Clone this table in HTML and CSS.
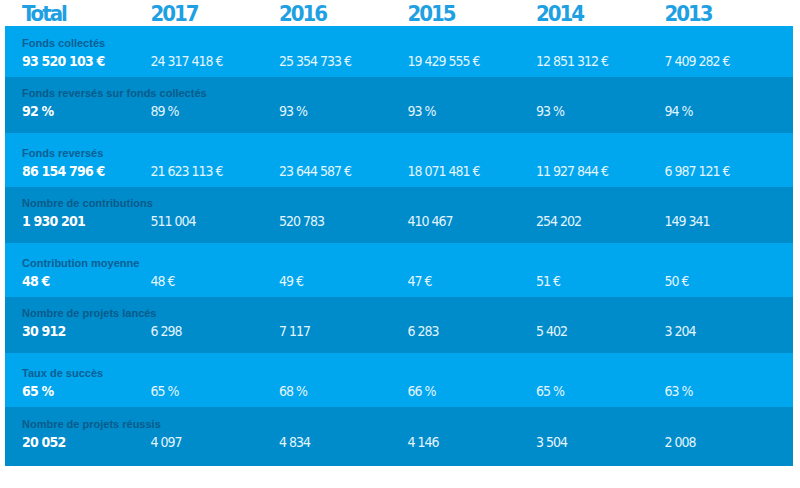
FILE: index.html
```html
<!DOCTYPE html>
<html lang="fr">
<head>
<meta charset="utf-8">
<title>Statistiques</title>
<link rel="stylesheet" href="styles.css">
</head>
<body>
<div class="stats">
  <div class="head">
    <div class="year">Total</div>
    <div class="year">2017</div>
    <div class="year">2016</div>
    <div class="year">2015</div>
    <div class="year">2014</div>
    <div class="year">2013</div>
  </div>
  <div class="table">
    <div class="row light first">
      <div class="label">Fonds collectés</div>
      <div class="vals"><span class="total">93 520 103 €</span><span>24 317 418 €</span><span>25 354 733 €</span><span>19 429 555 €</span><span>12 851 312 €</span><span>7 409 282 €</span></div>
    </div>
    <div class="row dark">
      <div class="label">Fonds reversés sur fonds collectés</div>
      <div class="vals"><span class="total">92 %</span><span>89 %</span><span>93 %</span><span>93 %</span><span>93 %</span><span>94 %</span></div>
    </div>
    <div class="row light">
      <div class="label">Fonds reversés</div>
      <div class="vals"><span class="total">86 154 796 €</span><span>21 623 113 €</span><span>23 644 587 €</span><span>18 071 481 €</span><span>11 927 844 €</span><span>6 987 121 €</span></div>
    </div>
    <div class="row dark">
      <div class="label">Nombre de contributions</div>
      <div class="vals"><span class="total">1 930 201</span><span>511 004</span><span>520 783</span><span>410 467</span><span>254 202</span><span>149 341</span></div>
    </div>
    <div class="row light">
      <div class="label">Contribution moyenne</div>
      <div class="vals"><span class="total">48 €</span><span>48 €</span><span>49 €</span><span>47 €</span><span>51 €</span><span>50 €</span></div>
    </div>
    <div class="row dark">
      <div class="label">Nombre de projets lancés</div>
      <div class="vals"><span class="total">30 912</span><span>6 298</span><span>7 117</span><span>6 283</span><span>5 402</span><span>3 204</span></div>
    </div>
    <div class="row light">
      <div class="label">Taux de succès</div>
      <div class="vals"><span class="total">65 %</span><span>65 %</span><span>68 %</span><span>66 %</span><span>65 %</span><span>63 %</span></div>
    </div>
    <div class="row dark last">
      <div class="label">Nombre de projets réussis</div>
      <div class="vals"><span class="total">20 052</span><span>4 097</span><span>4 834</span><span>4 146</span><span>3 504</span><span>2 008</span></div>
    </div>
  </div>
</div>
</body>
</html>
```
FILE: styles.css
```css
* { box-sizing: border-box; }
body {
  margin: 0;
  background: #ffffff;
  font-family: "DejaVu Sans", sans-serif;
  font-stretch: condensed;
}
.stats {
  padding: 0 7px 0 5px;
}
.head {
  display: grid;
  grid-template-columns: repeat(6, 128.5px);
  padding: 1px 0 0 17px;
  height: 26px;
}
.year {
  font-size: 22px;
  line-height: 25px;
  font-weight: bold;
  letter-spacing: -2px;
  color: #1ea0e2;
}
.table {
  width: 788px;
}
.row {
  padding-left: 17px;
}
.light { background: #00a6ee; height: 54px; padding-top: 13px; }
.dark { background: #008bcb; height: 56px; padding-top: 9px; }
.first { height: 51px; padding-top: 10px; }
.last { height: 59px; padding-top: 10px; }
.label {
  font-family: "Liberation Sans", Arial, sans-serif;
  font-stretch: normal;
  font-size: 11px;
  line-height: 14px;
  font-weight: bold;
  color: #0b5f94;
  white-space: nowrap;
}
.dark .label { color: #0a5b8a; }
.vals {
  display: grid;
  grid-template-columns: repeat(6, 128.5px);
  font-size: 14px;
  line-height: 22px;
  letter-spacing: -1px;
  color: #e3f5fe;
  white-space: nowrap;
}
.vals .total {
  font-weight: bold;
  font-size: 14px;
  letter-spacing: -0.8px;
  color: #ffffff;
}
```
